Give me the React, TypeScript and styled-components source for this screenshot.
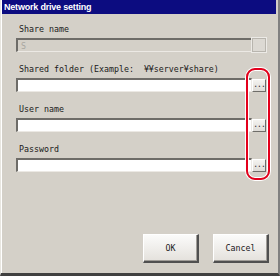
import styled, { createGlobalStyle } from "styled-components";

const GlobalStyle = createGlobalStyle`
  html, body {
    margin: 0;
    padding: 0;
    background: #d4d0c8;
  }
`;

const Window = styled.div`
  position: relative;
  box-sizing: border-box;
  width: 280px;
  height: 276px;
  display: flex;
  flex-direction: column;
  background: #d4d0c8;
  border-left: 1px solid #e8e6e0;
  border-right: 2px solid #808080;
  border-bottom: 3px solid #404040;
  box-shadow: inset 1px 0 0 #ffffff, inset -2px 0 0 #d4d0c8;
  font-family: 'DejaVu Sans Mono';
  font-size: 8.3px;
  color: #1a1a1a;
`;

const TitleBar = styled.div`
  height: 14px;
  margin-left: 1px;
  margin-right: 2px;
  padding-left: 2px;
  display: flex;
  align-items: center;
  background: #0c0c80;
  color: #ffffff;
  font-family: "Liberation Sans", Arial, sans-serif;
  font-weight: bold;
  font-size: 9px;
  letter-spacing: -0.2px;
`;

const Body = styled.div`
  flex: 1;
  display: flex;
  flex-direction: column;
  padding: 9px 0 0 15px;
`;

const Field = styled.div`
  display: flex;
  flex-direction: column;
  margin-bottom: 11px;
`;

const Label = styled.div`
  height: 12px;
  line-height: 12px;
  margin-left: 3px;
  margin-bottom: 3px;
  white-space: pre;
  font-family: 'DejaVu Sans Mono';
  font-size: 8.3px;
`;

const Row = styled.div`
  display: flex;
  align-items: flex-start;
`;

const Input = styled.div<{ $disabled?: boolean }>`
  box-sizing: border-box;
  width: 236px;
  height: 14px;
  padding: 1px 0 0 3px;
  line-height: 11px;
  background: ${(p) => (p.$disabled ? "#d4d0c8" : "#ffffff")};
  color: #a8a6a0;
  border-top: 2px solid #6e6c68;
  border-left: 2px solid #6e6c68;
  border-bottom: 1px solid #ece9e4;
  border-right: 1px solid #ece9e4;
`;

const BrowseButton = styled.div`
  box-sizing: border-box;
  width: 14px;
  height: 13px;
  margin-top: 1px;
  display: flex;
  align-items: flex-end;
  justify-content: center;
  background: linear-gradient(#f4f3f0, #dedbd6);
  border-top: 1px solid #ffffff;
  border-left: 1px solid #ffffff;
  border-right: 1px solid #6e6c68;
  border-bottom: 1px solid #6e6c68;
  font-size: 8px;
  line-height: 8px;
  color: #303030;
  letter-spacing: -1px;
  padding-bottom: 2px;
`;

const DisabledBox = styled.div`
  box-sizing: border-box;
  width: 14px;
  height: 14px;
  background: #dcd9d3;
  border: 1px solid #b8b5ae;
  box-shadow: 0 0 0 1px #eceae6;
`;

const Footer = styled.div`
  margin-top: auto;
  display: flex;
  justify-content: flex-end;
  gap: 14px;
  padding: 0 9px 10px 0;
`;

const DialogButton = styled.div`
  box-sizing: border-box;
  width: 56px;
  height: 29px;
  display: flex;
  align-items: center;
  justify-content: center;
  background: linear-gradient(#fbfbfa, #e4e1dc);
  border-top: 1px solid #ffffff;
  border-left: 1px solid #ffffff;
  border-right: 2px solid #505050;
  border-bottom: 2px solid #505050;
  box-shadow: inset -1px -1px 0 #a09d98;
`;

const Highlight = styled.div`
  position: absolute;
  left: 245px;
  top: 68px;
  width: 24px;
  height: 112px;
  box-sizing: border-box;
  border: 2px solid #e4001c;
  border-radius: 9px;
  box-shadow: 0 0 0 1px #ffffff, inset 0 0 0 1px #ffffff;
`;

const fields = [
  { label: "Share name", value: "S", disabled: true },
  { label: "Shared folder (Example:  ¥¥server¥share)", value: "" },
  { label: "User name", value: "" },
  { label: "Password", value: "" },
];

export default function App() {
  return (
    <>
      <GlobalStyle />
      <Window>
        <TitleBar>Network drive setting</TitleBar>
        <Body>
          {fields.map((f) => (
            <Field key={f.label}>
              <Label>{f.label}</Label>
              <Row>
                <Input $disabled={f.disabled}>{f.value}</Input>
                {f.disabled ? <DisabledBox /> : <BrowseButton>...</BrowseButton>}
              </Row>
            </Field>
          ))}
          <Footer>
            <DialogButton>OK</DialogButton>
            <DialogButton>Cancel</DialogButton>
          </Footer>
        </Body>
        <Highlight />
      </Window>
    </>
  );
}
